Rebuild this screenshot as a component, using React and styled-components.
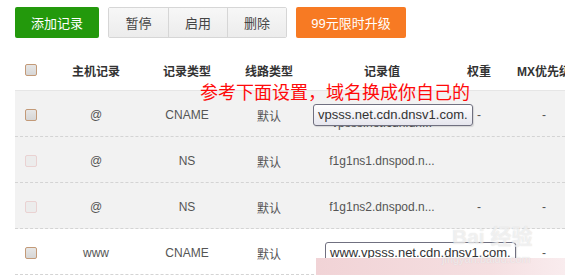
import React from 'react';
import styled, { createGlobalStyle } from 'styled-components';

const GlobalStyle = createGlobalStyle`
  html, body {
    margin: 0;
    padding: 0;
    background: #fff;
    width: 565px;
    height: 275px;
    overflow: hidden;
  }
  body {
    font-family: "Liberation Sans", "Noto Sans CJK SC", sans-serif;
    color: #333;
  }
`;

const Page = styled.div`
  position: relative;
  width: 565px;
  height: 275px;
  overflow: hidden;
`;

// toolbar
const Toolbar = styled.div`
  display: flex;
  align-items: center;
  gap: 9px;
  padding: 7px 0 0 15px;
`;

const SolidButton = styled.button`
  height: 31px;
  padding: 0;
  width: ${p => p.$w}px;
  border: none;
  border-radius: 2px;
  background: ${p => p.$bg};
  color: #fff;
  font-family: "Liberation Sans", "Noto Sans CJK SC", sans-serif;
  font-size: 13px;
  cursor: pointer;
`;

const ButtonGroup = styled.div`
  display: flex;
  height: 31px;
  border: 1px solid #d6d6d6;
  border-radius: 2px;
  box-sizing: border-box;
`;

const GroupButton = styled.button`
  width: 59px;
  height: 100%;
  padding: 0;
  border: none;
  border-left: ${p => (p.$first ? 'none' : '1px solid #d6d6d6')};
  background: linear-gradient(#f7f7f7, #ececec);
  color: #444;
  font-family: "Liberation Sans", "Noto Sans CJK SC", sans-serif;
  font-size: 13px;
`;

// table
const Table = styled.div`
  margin: 12px 0 0 15px;
`;

const cols = '35px 92px 90px 74px 152px 42px 88px';

const HeadRow = styled.div`
  display: grid;
  grid-template-columns: ${cols};
  height: 40px;
  align-items: center;
  border-bottom: 1px solid #e6e6e6;
`;

const HeadCell = styled.div`
  text-align: center;
  font-size: 12px;
  font-weight: bold;
  color: #333;
  white-space: nowrap;
`;

const Row = styled.div`
  display: grid;
  grid-template-columns: ${cols};
  height: 46px;
  padding-top: 3px;
  box-sizing: border-box;
  align-items: center;
  background: ${p => (p.$gray ? '#f2f2f2' : '#fff')};
  border-bottom: 1px dashed #d4d4d4;
`;

const Cell = styled.div`
  position: relative;
  text-align: center;
  font-size: 12px;
  color: #555;
  white-space: nowrap;
`;

const Hidden = styled.span`
  position: relative;
  top: 8px;
`;

const Check = styled.span`
  display: block;
  width: 10px;
  height: 10px;
  margin-left: 10px;
  border: 1px solid ${p => (p.$disabled ? '#ead2d2' : '#c39a78')};
  border-radius: 2px;
  background: ${p => (p.$disabled ? '#ececec' : 'linear-gradient(#e6e6e6, #d6d6d6)')};
`;

const Tip = styled.div`
  position: absolute;
  top: ${p => p.$top}px;
  left: ${p => p.$left}px;
  height: 20px;
  line-height: 20px;
  padding: 0 4px;
  font-size: 13px;
  color: #333;
  border: 1px solid #707080;
  border-radius: 3px;
  background: ${p => (p.$plain ? '#fff' : 'linear-gradient(#fff, #e6e6ee)')};
  box-shadow: 1px 1px 1px rgba(0, 0, 0, .12);
  z-index: 2;
`;

const Note = styled.div`
  position: absolute;
  top: 78px;
  left: 200px;
  font-family: "Noto Sans CJK SC", sans-serif;
  font-size: 18px;
  line-height: 26px;
  color: #ff0a0a;
  white-space: nowrap;
  z-index: 3;
`;

const Watermark = styled.div`
  position: absolute;
  left: 452px;
  top: 226px;
  font-family: "Liberation Sans", "Noto Sans CJK SC", sans-serif;
  font-size: 21px;
  font-weight: bold;
  color: rgba(255, 255, 255, .6);
  text-shadow: 0 0 1px rgba(170, 170, 170, .45);
  line-height: 1;
  z-index: 4;
  span {
    display: block;
    font-size: 11px;
    font-weight: normal;
    margin-top: 7px;
    margin-left: -10px;
  }
`;

const PinkBand = styled.div`
  position: absolute;
  left: 316px;
  top: 258px;
  width: 249px;
  height: 17px;
  background: linear-gradient(90deg, #f1d3d6, #f5dfe1 70%, #f9ecee);
  z-index: 3;
`;

const rows = [
  { host: '@', type: 'CNAME', value: 'vpsss.net.cdn.dn...', w: '-', mx: '-', gray: true },
  { host: '@', type: 'NS', value: 'f1g1ns1.dnspod.n...', w: '', mx: '', gray: true, disabled: true },
  { host: '@', type: 'NS', value: 'f1g1ns2.dnspod.n...', w: '-', mx: '-', gray: true, disabled: true },
  { host: 'www', type: 'CNAME', value: '', w: '', mx: '-', gray: false },
];

export default function App() {
  return (
    <Page>
      <GlobalStyle />
      <Toolbar>
        <SolidButton $bg="#23990c" $w={84}>添加记录</SolidButton>
        <ButtonGroup>
          <GroupButton $first>暂停</GroupButton>
          <GroupButton>启用</GroupButton>
          <GroupButton>删除</GroupButton>
        </ButtonGroup>
        <SolidButton $bg="#f77a23" $w={110}>99元限时升级</SolidButton>
      </Toolbar>

      <Table>
        <HeadRow>
          <Cell><Check /></Cell>
          <HeadCell>主机记录</HeadCell>
          <HeadCell>记录类型</HeadCell>
          <HeadCell>线路类型</HeadCell>
          <HeadCell>记录值</HeadCell>
          <HeadCell>权重</HeadCell>
          <HeadCell>MX优先级</HeadCell>
        </HeadRow>
        {rows.map((r, i) => (
          <Row key={i} $gray={r.gray}>
            <Cell><Check $disabled={r.disabled} /></Cell>
            <Cell>{r.host}</Cell>
            <Cell>{r.type}</Cell>
            <Cell>默认</Cell>
            <Cell>
              {i === 0 ? <Hidden>{r.value}</Hidden> : r.value}
              {i === 0 && <Tip $top={-4} $left={7}>vpsss.net.cdn.dnsv1.com.</Tip>}
              {i === 3 && <Tip $plain $top={-11} $left={19}>www.vpsss.net.cdn.dnsv1.com.</Tip>}
            </Cell>
            <Cell>{r.w}</Cell>
            <Cell>{r.mx}</Cell>
          </Row>
        ))}
      </Table>

      <Note>参考下面设置，域名换成你自己的</Note>
      <Watermark>Bai 经验<span>jingyan.baidu.com</span></Watermark>
      <PinkBand />
    </Page>
  );
}
